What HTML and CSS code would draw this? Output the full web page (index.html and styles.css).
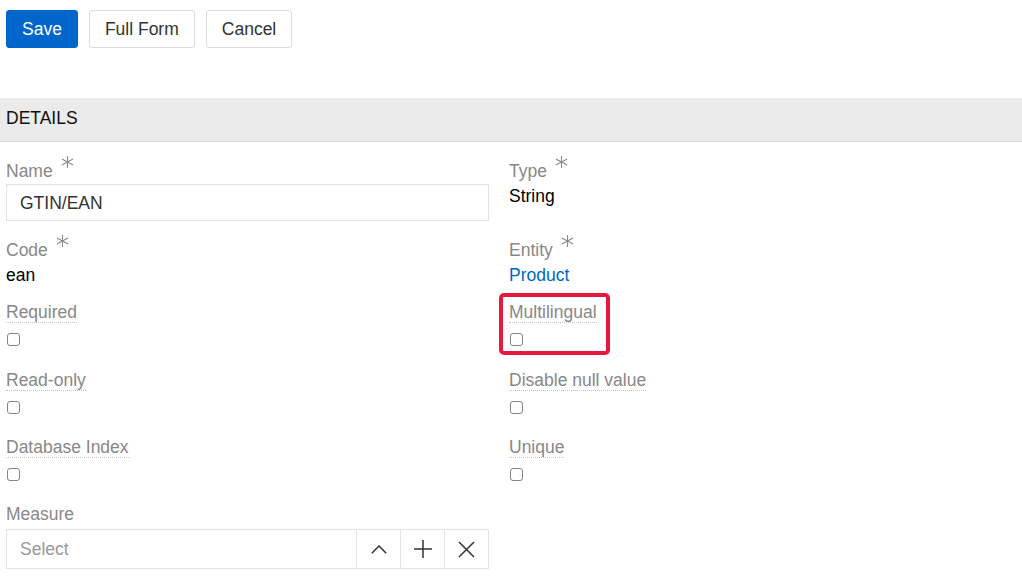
FILE: index.html
```html
<!DOCTYPE html>
<html>
<head>
<meta charset="utf-8">
<link rel="stylesheet" href="styles.css">
</head>
<body>
<div class="toolbar">
  <button class="btn btn-primary">Save</button>
  <button class="btn">Full Form</button>
  <button class="btn">Cancel</button>
</div>

<div class="section-head">DETAILS</div>

<div class="form">
  <div class="field field-input">
    <div class="label">Name<svg class="req" viewBox="0 0 13 12" width="13" height="12"><path d="M6.5 0V12M0.9 2.9L12.1 9.1M0.9 9.1L12.1 2.9"/></svg></div>
    <div class="input">GTIN/EAN</div>
  </div>
  <div class="field field-value">
    <div class="label">Type<svg class="req" viewBox="0 0 13 12" width="13" height="12"><path d="M6.5 0V12M0.9 2.9L12.1 9.1M0.9 9.1L12.1 2.9"/></svg></div>
    <div class="value">String</div>
  </div>

  <div class="field field-value">
    <div class="label">Code<svg class="req" viewBox="0 0 13 12" width="13" height="12"><path d="M6.5 0V12M0.9 2.9L12.1 9.1M0.9 9.1L12.1 2.9"/></svg></div>
    <div class="value">ean</div>
  </div>
  <div class="field field-value">
    <div class="label">Entity<svg class="req" viewBox="0 0 13 12" width="13" height="12"><path d="M6.5 0V12M0.9 2.9L12.1 9.1M0.9 9.1L12.1 2.9"/></svg></div>
    <div class="value link">Product</div>
  </div>

  <div class="field field-check field-check-first">
    <div class="label"><span class="hint">Required</span></div>
    <input type="checkbox" class="check">
  </div>
  <div class="field field-check field-check-first">
    <div class="label"><span class="hint">Multilingual</span></div>
    <input type="checkbox" class="check">
    <div class="mark"></div>
  </div>

  <div class="field field-check">
    <div class="label"><span class="hint">Read-only</span></div>
    <input type="checkbox" class="check">
  </div>
  <div class="field field-check">
    <div class="label"><span class="hint">Disable null value</span></div>
    <input type="checkbox" class="check">
  </div>

  <div class="field field-check">
    <div class="label"><span class="hint">Database Index</span></div>
    <input type="checkbox" class="check">
  </div>
  <div class="field field-check">
    <div class="label"><span class="hint">Unique</span></div>
    <input type="checkbox" class="check">
  </div>

  <div class="field">
    <div class="label">Measure</div>
    <div class="select">
      <div class="select-text">Select</div>
      <div class="select-btn">
        <svg viewBox="0 0 16 9" width="16" height="9"><path d="M0.8 8.2L8 1L15.2 8.2"/></svg>
      </div>
      <div class="select-btn">
        <svg viewBox="0 0 18 18" width="18" height="18"><path d="M9 0V18M0 9H18"/></svg>
      </div>
      <div class="select-btn">
        <svg viewBox="0 0 17 17" width="17" height="17"><path d="M1 1L16 16M16 1L1 16"/></svg>
      </div>
    </div>
  </div>
  <div class="field"></div>
</div>
</body>
</html>
```

FILE: styles.css
```css
* { box-sizing: border-box; }

html, body {
  margin: 0;
  padding: 0;
  background: #fff;
}

body {
  font-family: "Liberation Sans", Arial, sans-serif;
  font-size: 17.5px;
  line-height: 22px;
  color: #000;
  width: 1022px;
  height: 576px;
  overflow: hidden;
}

.toolbar {
  display: flex;
  gap: 11px;
  padding: 10px 6px 0;
}

.btn {
  height: 38px;
  padding: 0 15px;
  border: 1px solid #dcdcdc;
  border-radius: 3px;
  background: #fff;
  color: #333;
  font-family: inherit;
  font-size: 17.5px;
  line-height: 22px;
  cursor: pointer;
}

.btn-primary {
  background: #0066cc;
  border-color: #0066cc;
  color: #fff;
}

.section-head {
  margin-top: 50px;
  padding: 9px 6px 12px;
  background: #ebebeb;
  border-bottom: 1px solid #dadada;
  color: #111;
  line-height: 22px;
}

.form {
  display: grid;
  grid-template-columns: 483px 483px;
  column-gap: 20px;
  padding: 17px 6px 0;
}

.field {
  position: relative;
}

.field-input { padding-bottom: 17px; }
.field-value { padding-bottom: 14px; }
.field-check { padding-bottom: 21px; }
.field-check-first { padding-bottom: 22px; }

.label {
  color: #888;
  height: 22px;
  padding-top: 1px;
  white-space: nowrap;
}

.req {
  display: inline-block;
  vertical-align: top;
  position: relative;
  top: -4px;
  margin-left: 8px;
  fill: none;
  stroke: #8a8a8a;
  stroke-width: 1.1;
}

.hint {
  border-bottom: 1px dotted #c4c4c4;
}

.input {
  margin-top: 3px;
  height: 37px;
  border: 1px solid #e2e2e2;
  padding: 7px 13px;
  color: #333;
}

.value {
  margin-top: 4px;
  color: #000;
}

.value.link {
  color: #0066cc;
}

.check {
  appearance: none;
  -webkit-appearance: none;
  display: block;
  width: 13px;
  height: 13px;
  margin: 11px 0 0 1px;
  border: 1.5px solid #858585;
  border-radius: 3px;
  background: #fff;
}

.mark {
  position: absolute;
  left: -10px;
  top: -7px;
  width: 111px;
  height: 62px;
  border: 4px solid #e8173f;
  border-radius: 5px;
  pointer-events: none;
}

.select {
  margin-top: 5px;
  height: 40px;
  border: 1px solid #e2e2e2;
  display: flex;
}

.select-text {
  flex: 1;
  padding: 8px 13px;
  color: #999;
}

.select-btn {
  width: 44px;
  border-left: 1px solid #e2e2e2;
  display: flex;
  align-items: center;
  justify-content: center;
}

.select-btn svg {
  fill: none;
  stroke: #333;
  stroke-width: 1.5;
}
```
